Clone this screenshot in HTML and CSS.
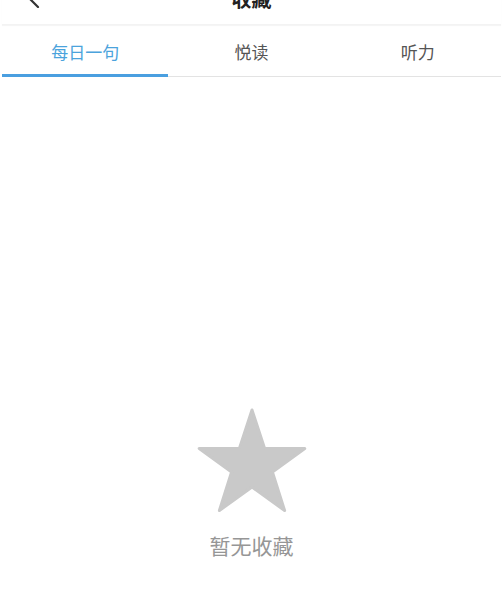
FILE: index.html
```html
<!DOCTYPE html>
<html>
  <head>
    <meta charset="utf-8">
    <link rel="stylesheet" href="styles.css">
  </head>
  <body>
    <div class="page">
      <div class="header">
        <span class="back-btn">
          <svg width="20" height="20" viewBox="0 0 20 20">
            <path d="M14 1 L5 10 L14 19" fill="none" stroke="#333" stroke-width="2.2" stroke-linecap="round" stroke-linejoin="round"/>
          </svg>
        </span>
        <div class="title">收藏</div>
      </div>

      <div class="tabs">
        <div class="tab active">每日一句</div>
        <div class="tab">悦读</div>
        <div class="tab">听力</div>
      </div>

      <div class="content">
        <div class="empty-state">
          <svg class="empty-icon" width="110" height="105" viewBox="0 0 110 105">
            <polygon points="55,2 67.6,40.5 107.8,40.5 75.4,64 87.6,102.5 55,79 22.4,102.5 34.6,64 2.2,40.5 42.4,40.5" fill="#c9c9c9" stroke="#c9c9c9" stroke-width="3" stroke-linejoin="round"/>
          </svg>
          <div class="empty-text">暂无收藏</div>
        </div>
      </div>
    </div>
  </body>
</html>
```

FILE: styles.css
```css
body {
  font-family: "Noto Sans CJK SC", "Noto Sans", sans-serif;
  margin: 0;
  padding: 0;
  background-color: #fff;
  overflow: hidden;
}
.page {
  padding: 0 2px;
}
.header {
  height: 52px;
  margin-top: -27px;
  display: flex;
  align-items: center;
  justify-content: center;
  position: relative;
  box-shadow: 0 1px 1px rgba(0, 0, 0, 0.04);
  border-bottom: 1px solid #f3f3f3;
  box-sizing: border-box;
}
.back-btn {
  position: absolute;
  left: 22px;
  top: 15px;
  display: flex;
}
.title {
  font-size: 20px;
  font-weight: 700;
  color: #222;
}
.tabs {
  display: flex;
  border-bottom: 1px solid #e3e3e3;
}
.tab {
  flex: 1;
  height: 52px;
  margin-bottom: -1px;
  box-sizing: border-box;
  padding-top: 4px;
  border-bottom: 3px solid transparent;
  display: flex;
  align-items: center;
  justify-content: center;
  font-size: 17px;
  color: #555;
}
.tab.active {
  color: #4ba3dc;
  border-bottom-color: #4a9fe0;
}
.content {
  display: flex;
  justify-content: center;
}
.empty-state {
  padding-top: 331px;
  display: flex;
  flex-direction: column;
  align-items: center;
}
.empty-text {
  margin-top: 18px;
  font-size: 21px;
  line-height: 28px;
  color: #969696;
}
```
